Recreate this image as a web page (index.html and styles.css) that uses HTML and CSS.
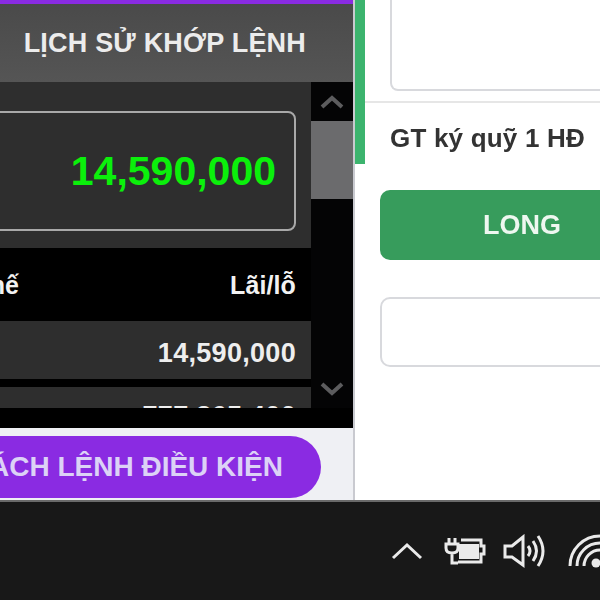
FILE: index.html
```html
<!DOCTYPE html>
<html lang="vi">
<head>
<meta charset="utf-8">
<title>Giao dịch</title>
<link rel="stylesheet" href="styles.css">
</head>
<body>
<div class="screen">
  <main class="workspace">
    <section class="left">
      <div class="accent"></div>
      <div class="tabbar"><span class="tab">LỊCH SỬ KHỚP LỆNH</span></div>
      <div class="history">
        <div class="list">
          <div class="summary">
            <div class="total"><span class="total-value">14,590,000</span></div>
          </div>
          <div class="table-head">
            <span class="col-clipped">Thế</span>
            <span class="col-last">Lãi/lỗ</span>
          </div>
          <div class="row"><span>14,590,000</span></div>
          <div class="row row-cut"><span>777,365,400</span></div>
        </div>
        <div class="scrollbar">
          <div class="scroll-btn">
            <svg class="scroll-icon" viewBox="0 0 24 14"><path d="M2 12 L12 3 L22 12"/></svg>
          </div>
          <div class="scroll-thumb"></div>
          <div class="scroll-rest"></div>
          <div class="scroll-btn scroll-btn-end">
            <svg class="scroll-icon" viewBox="0 0 24 14"><path d="M2 2 L12 11 L22 2"/></svg>
          </div>
        </div>
      </div>
      <div class="foot-black"></div>
      <div class="actions">
        <button class="pill">DANH SÁCH LỆNH ĐIỀU KIỆN</button>
      </div>
    </section>
    <section class="right">
      <div class="strip"></div>
      <div class="form">
        <div class="form-top"><div class="input input-top"></div></div>
        <div class="margin-row">GT ký quỹ 1 HĐ</div>
        <div class="form-body">
          <button class="long">LONG</button>
          <div class="input input-low"></div>
        </div>
      </div>
    </section>
  </main>
  <footer class="taskbar">
    <svg class="tray tray-up" viewBox="0 0 32 20"><path d="M2 17 L16 4 L30 17"/></svg>
    <svg class="tray tray-power" viewBox="0 0 42 30">
      <path d="M5 2 V8 M11 2 V8 M2 8 H14 V12 Q14 17 8 17 Q2 17 2 12 Z M8 17 V27 H14"/>
      <path d="M17 4 H37 V10 H40 V18 H37 V26 H14"/>
      <rect class="fill" x="15" y="8" width="20" height="15"/>
    </svg>
    <svg class="tray tray-sound" viewBox="0 0 42 34">
      <path d="M2 12 H9 L20 3 V31 L9 23 H2 Z"/>
      <path d="M25 12 Q29 17 25 22"/>
      <path d="M30 7 Q37 17 30 27"/>
      <path d="M35 2 Q45 17 35 32"/>
    </svg>
    <svg class="tray tray-wifi" viewBox="0 0 32 34">
      <path d="M2 32 A30 30 0 0 1 32 2"/>
      <path d="M9 32 A23 23 0 0 1 32 9"/>
      <path d="M16 32 A16 16 0 0 1 32 16"/>
      <circle class="fill" cx="28" cy="29" r="4.5"/>
    </svg>
  </footer>
</div>
</body>
</html>
```
FILE: styles.css
```css
* { box-sizing: border-box; }
html, body { margin: 0; padding: 0; height: 600px; overflow: hidden; background: #fff; }
body { font-family: "Liberation Sans", Arial, sans-serif; }

.screen { width: 600px; height: 600px; display: flex; flex-direction: column; overflow: hidden; filter: blur(0.55px); }
.workspace { height: 500px; display: flex; overflow: hidden; }

.left { width: 355px; flex: none; display: flex; flex-direction: column; border-right: 2px solid #c9cad0; overflow: hidden; }
.accent { height: 4px; background: #8a2be2; flex: none; }
.tabbar { height: 78px; flex: none; display: flex; align-items: center; justify-content: flex-end; padding-right: 47px; background: linear-gradient(#4a4a4a, #555); }
.tab { font-size: 27px; font-weight: 700; letter-spacing: 0.2px; color: #ececec; white-space: nowrap; }

.history { height: 326px; flex: none; display: flex; background: #000; overflow: hidden; }
.list { width: 311px; flex: none; display: flex; flex-direction: column; overflow: hidden; }
.summary { height: 166px; flex: none; padding: 29px 15px 17px 0; background: #2e2e2e; }
.total { height: 120px; margin-left: -20px; border: 2px solid #a9a9a9; border-radius: 8px; display: flex; align-items: center; justify-content: flex-end; padding-right: 18px; }
.total-value { font-size: 41px; font-weight: 700; color: #0bf00b; }
.table-head { height: 73px; flex: none; display: flex; justify-content: flex-end; align-items: center; gap: 211px; padding-right: 15px; padding-top: 1px; font-size: 25px; font-weight: 700; letter-spacing: 0.1px; color: #f2f2f2; white-space: nowrap; }
.row { height: 58px; flex: none; margin-bottom: 8px; display: flex; align-items: center; justify-content: flex-end; padding: 6px 15px 0 0; background: #2e2e2e; font-size: 27px; font-weight: 700; letter-spacing: 0.3px; color: #eee; }
.row-cut { padding-top: 0; }
.scrollbar { width: 42px; flex: none; display: flex; flex-direction: column; background: #040405; }
.scroll-btn { height: 39px; flex: none; display: flex; align-items: center; justify-content: center; }
.scroll-btn-end { height: 39px; }
.scroll-icon { width: 24px; height: 14px; fill: none; stroke: #5c5c5e; stroke-width: 4; }
.scroll-thumb { height: 78px; flex: none; background: #6b6b6d; }
.scroll-rest { flex: 1; }

.foot-black { height: 20px; flex: none; background: #000; }
.actions { height: 72px; flex: none; display: flex; justify-content: flex-end; padding: 8px 32px 2px 0; background: #eff0f4; }
.pill { flex: none; height: 62px; padding: 0 38px 0 30px; border: 0; border-radius: 31px; background: #8a2be2; color: #dcd2f6; font: 700 28px "Liberation Sans", Arial, sans-serif; white-space: nowrap; }

.right { flex: 1; display: flex; min-width: 0; overflow: hidden; }
.strip { width: 10px; height: 164px; flex: none; background: #3cb46e; }
.form { flex: 1; min-width: 0; display: flex; flex-direction: column; }
.form-top { height: 103px; flex: none; padding: 0 0 10px 25px; border-bottom: 2px solid #e6e6e6; }
.input { border: 2px solid #d8d9dd; border-radius: 10px; margin-right: -20px; }
.input-top { height: 91px; border-top: 0; border-radius: 0 0 0 8px; }
.margin-row { height: 70px; flex: none; padding: 20px 0 0 25px; font-size: 26px; font-weight: 700; letter-spacing: 0.2px; color: #333; white-space: nowrap; }
.form-body { padding: 17px 0 0 15px; display: flex; flex-direction: column; gap: 37px; }
.long { height: 70px; margin-right: -64px; border: 0; border-radius: 10px; background: #379c5c; color: #eef7f0; font: 700 27px "Liberation Sans", Arial, sans-serif; }
.input-low { height: 70px; }

.taskbar { height: 100px; flex: none; display: flex; align-items: center; justify-content: flex-end; background: #181818; border-top: 2px solid #6a6a6a; overflow: hidden; }
.tray { flex: none; fill: none; stroke: #eaeaea; stroke-width: 3; }
.tray .fill { fill: #eaeaea; stroke: none; }
.tray-up { width: 32px; height: 20px; margin-right: 21px; }
.tray-power { width: 42px; height: 30px; margin-right: 17px; }
.tray-sound { width: 42px; height: 34px; margin-right: 23px; }
.tray-wifi { width: 32px; height: 34px; }
```
